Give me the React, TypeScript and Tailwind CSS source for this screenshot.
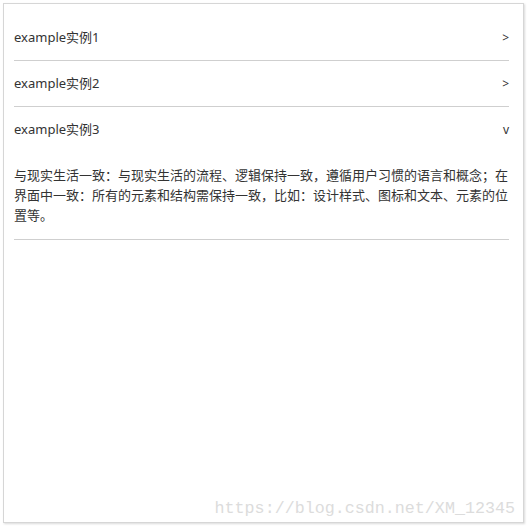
import React, { useState } from 'react'

const items = [
  { title: 'example实例1', body: '' },
  { title: 'example实例2', body: '' },
  {
    title: 'example实例3',
    body: '与现实生活一致：与现实生活的流程、逻辑保持一致，遵循用户习惯的语言和概念；在界面中一致：所有的元素和结构需保持一致，比如：设计样式、图标和文本、元素的位置等。',
  },
]

function App() {
  const [open, setOpen] = useState(2)
  return (
    <div className="relative w-[527px] h-[529px] bg-white p-[3px]">
      <div className="h-[520px] w-[521px] border border-[#d6d6d6] shadow-[1px_1px_2px_rgba(0,0,0,0.15)] bg-white pt-[11px] pl-[10px] pr-[14px]"
        style={{ fontFamily: '"Noto Sans", "Noto Sans CJK SC", sans-serif' }}>
        {items.map((item, i) => (
          <div key={i} className="border-b border-[#cfcfcf]">
            <div
              onClick={() => setOpen(open === i ? -1 : i)}
              className="h-[45px] flex items-center justify-between text-[13px] text-[#333] cursor-pointer"
            >
              <span>{item.title}</span>
              <span className="text-[12px] text-[#333]">{open === i ? 'v' : '>'}</span>
            </div>
            {open === i && (
              <p className="pt-[13px] pb-[14px] text-[13px] leading-[20px] text-[#333] break-all">{item.body}</p>
            )}
          </div>
        ))}
      </div>
      <span className="absolute right-[12px] bottom-[8px] text-[16.7px] text-[#dcdcdc]"
        style={{ fontFamily: '"Liberation Mono", monospace' }}>
        https://blog.csdn.net/XM_12345
      </span>
    </div>
  )
}

export default App
